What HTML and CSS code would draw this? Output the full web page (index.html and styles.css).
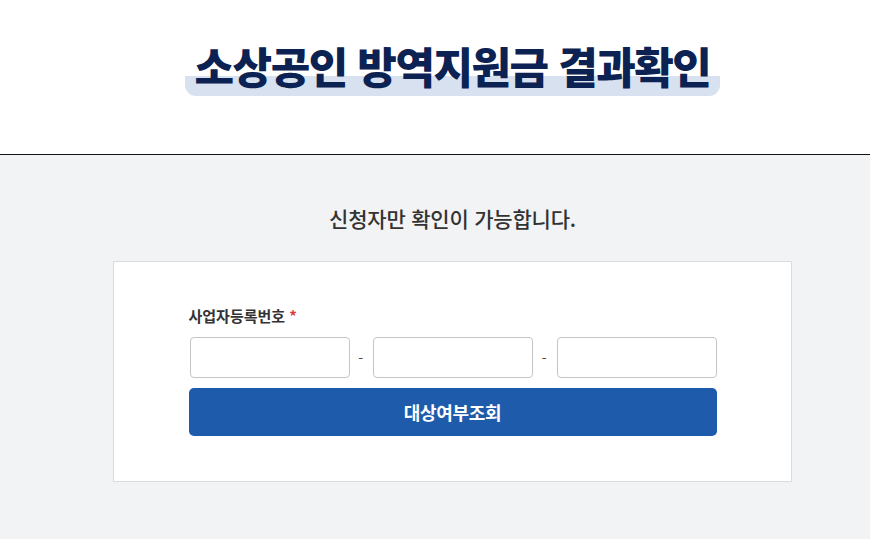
FILE: index.html
```html
<!DOCTYPE html>
<html lang="ko">
<head>
    <meta charset="UTF-8">
    <meta name="viewport" content="width=device-width, initial-scale=1.0">
    <title>소상공인 방역지원금 결과확인</title>
    <link rel="stylesheet" href="styles.css">
</head>
<body>
    <div id="header">
        <h1 class="title"><span>소상공인 방역지원금 결과확인</span></h1>
    </div>
    <div id="content">
        <p class="notice">신청자만 확인이 가능합니다.</p>
        <div class="card">
            <form class="check-form" action="javascript:void(0)">
                <label class="field-label">사업자등록번호 <em>*</em></label>
                <div class="biz-inputs">
                    <input type="text" maxlength="3" autocomplete="off">
                    <span class="dash">-</span>
                    <input type="text" maxlength="2" autocomplete="off">
                    <span class="dash">-</span>
                    <input type="text" maxlength="5" autocomplete="off">
                </div>
                <button type="submit" class="submit-btn">대상여부조회</button>
            </form>
        </div>
    </div>
</body>
</html>
```

FILE: styles.css
```css
html, body {
    margin: 0;
    padding: 0;
}
body {
    background-color: #f2f3f5;
    color: #333;
    font-family: "Noto Sans CJK KR", "Noto Sans", sans-serif;
}
#header {
    background-color: #fff;
    height: 154px;
    border-bottom: 1px solid #111;
    display: flex;
    justify-content: center;
    padding-left: 35px;
}
.title {
    margin: 34px 0 0 0;
    font-size: 43px;
    font-weight: 900;
    letter-spacing: -1.5px;
    color: #0b2252;
    line-height: 62px;
}
.title span {
    display: inline-block;
    padding: 0 10px;
    border-radius: 11px;
    background: linear-gradient(to bottom, transparent 42px, #d8e1f0 42px, #d8e1f0 63px, transparent 63px);
}
#content {
    padding-top: 48px;
    padding-left: 35px;
    display: flex;
    flex-direction: column;
    align-items: center;
}
.notice {
    margin: 0;
    font-size: 21px;
    font-weight: 500;
    letter-spacing: -0.2px;
    line-height: 30px;
    color: #333;
}
.card {
    margin-top: 28px;
    width: 677px;
    height: 219px;
    background-color: #fff;
    border: 1px solid #dcdcdc;
    display: flex;
    justify-content: center;
}
.check-form {
    width: 528px;
    padding-top: 43px;
    display: flex;
    flex-direction: column;
}
.field-label {
    font-size: 15px;
    font-weight: 700;
    color: #333;
    line-height: 22px;
}
.field-label em {
    font-style: normal;
    color: #e03a3a;
}
.biz-inputs {
    margin-top: 10px;
    display: flex;
    align-items: center;
}
.biz-inputs input {
    width: 160px;
    height: 41px;
    box-sizing: border-box;
    border: 1px solid #c4c4c4;
    border-radius: 4px;
    padding: 0 10px;
    font-size: 14px;
    margin: 0 0 0 1px;
}
.dash {
    width: 23px;
    text-align: center;
    font-size: 14px;
    color: #444;
}
.submit-btn {
    margin-top: 10px;
    height: 48px;
    width: 528px;
    border: none;
    border-radius: 5px;
    background-color: #1f5bab;
    color: #fff;
    font-family: "Noto Sans CJK KR", "Noto Sans", sans-serif;
    font-size: 18px;
    font-weight: 700;
    letter-spacing: -0.3px;
    cursor: pointer;
}
```
